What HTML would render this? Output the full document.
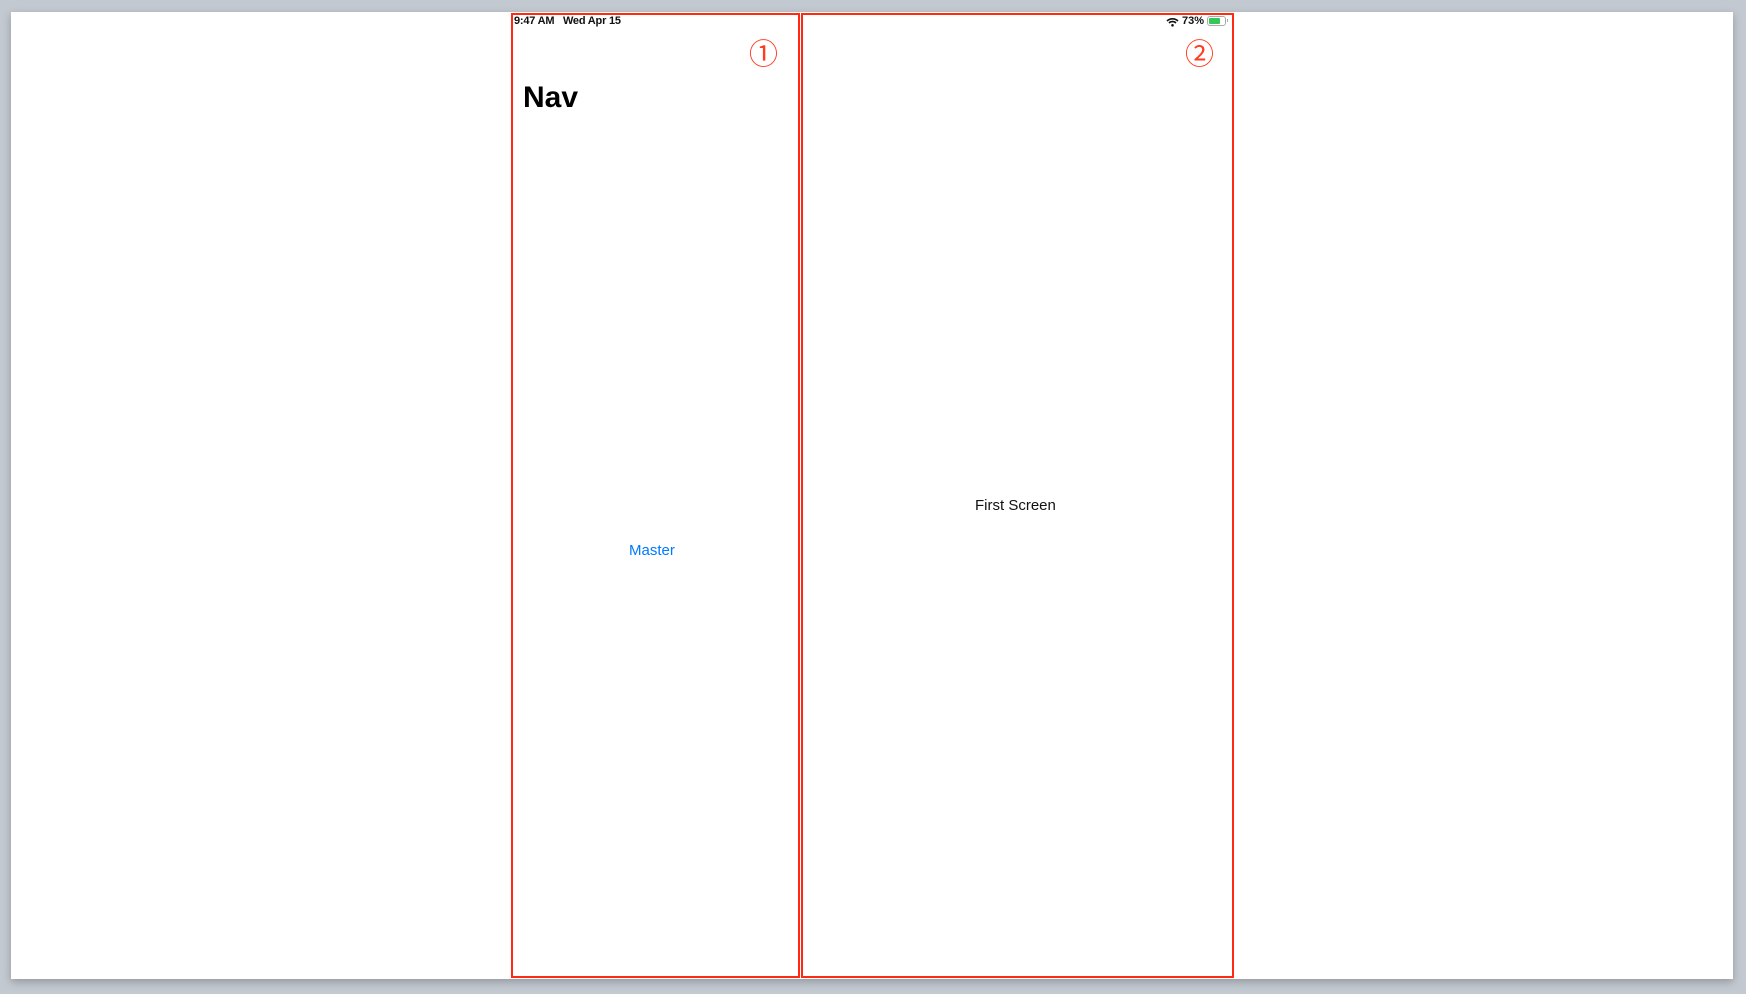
<!DOCTYPE html>
<html><head><style>
body{margin:0;width:1746px;height:994px;background:#c3c9d1;position:relative;overflow:hidden;font-family:"Liberation Sans",sans-serif}
.page{position:absolute;left:11px;top:12px;width:1722px;height:967px;background:#fff;box-shadow:0 3px 8px rgba(0,0,0,.25)}
.box{position:absolute;border:2px solid #ff2a12;box-sizing:border-box}
.t{position:absolute;white-space:nowrap}
</style></head><body>
<div class="page"></div>
<div class="box" style="left:511px;top:13px;width:289px;height:965px"></div>
<div class="box" style="left:801px;top:13px;width:433px;height:965px"></div>
<div class="t" style="left:514px;top:15px;font-size:11px;color:#111;font-weight:bold;letter-spacing:-0.2px">9:47 AM&nbsp;&nbsp;&nbsp;Wed Apr 15</div>
<div class="t" style="left:523px;top:81px;font-size:30px;font-weight:bold;color:#000">Nav</div>
<div class="t" style="left:749px;top:37px;font-size:29px;color:#ff3b20;font-family:'Noto Sans CJK JP',sans-serif;line-height:30px">①</div>
<div class="t" style="left:1185px;top:37px;font-size:29px;color:#ff3b20;font-family:'Noto Sans CJK JP',sans-serif;line-height:30px">②</div>
<div class="t" style="left:629px;top:542px;font-size:15px;color:#007aff">Master</div>
<div class="t" style="left:975px;top:497px;font-size:15px;color:#111">First Screen</div>
<svg style="position:absolute;left:1166px;top:17px" width="13" height="10" viewBox="0 0 13 10"><path d="M1 4 A8 8 0 0 1 12 4 M3 6 A5 5 0 0 1 10 6" stroke="#111" stroke-width="1.6" fill="none"/><circle cx="6.5" cy="8.3" r="1.3" fill="#111"/></svg>
<div class="t" style="left:1182px;top:15px;font-size:11px;color:#111;font-weight:bold">73%</div>
<div style="position:absolute;left:1207px;top:16px;width:19px;height:10px;border:1px solid #aaa;border-radius:3px;box-sizing:border-box"><div style="margin:1px;width:11px;height:6px;background:#34c759;border-radius:1px"></div></div>
<div style="position:absolute;left:1227px;top:19px;width:1px;height:3px;background:#aaa"></div>
</body></html>
